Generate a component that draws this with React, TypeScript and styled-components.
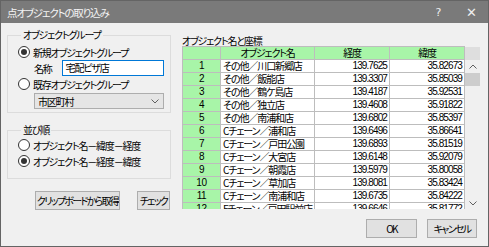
import styled, { createGlobalStyle } from 'styled-components'

const GlobalStyle = createGlobalStyle`
    html, body {
        margin: 0;
        padding: 0;
        background: #f0f0f0;
    }
    * {
        box-sizing: border-box;
    }
`

const Dialog = styled.div`
    display: flex;
    flex-flow: column;
    width: 489px;
    height: 247px;
    border: 1px solid #646464;
    background: #f0f0f0;
    font-family: 'Noto Sans CJK JP', sans-serif;
    font-size: 10px;
    font-feature-settings: 'palt';
    letter-spacing: -1.2px;
    color: #000;
    overflow: hidden;
`

const TitleBar = styled.div`
    display: flex;
    align-items: center;
    height: 22px;
    padding: 0 0 0 6px;
    background: #7a7a7a;
    color: #f4f4f4;
    font-size: 10.5px;
`

const Title = styled.div`
    flex: 1;
`

const TitleButton = styled.div<{ $size?: number }>`
    width: 33px;
    text-align: center;
    font-family: 'DejaVu Sans', sans-serif;
    letter-spacing: 0;
    font-size: ${(p) => p.$size ?? 11}px;
    color: #eeeeee;
`

const Body = styled.div`
    flex: 1;
    display: flex;
    flex-flow: row;
    padding: 6px 8px 0 6px;
`

const LeftColumn = styled.div`
    display: flex;
    flex-flow: column;
    width: 166px;
`

const Group = styled.fieldset<{ $height: number; $gap?: number; $pad: string }>`
    display: flex;
    flex-flow: column;
    height: ${(p) => p.$height}px;
    margin: 0 0 ${(p) => p.$gap ?? 0}px 0;
    padding: ${(p) => p.$pad};
    border: 1px solid #dcdcdc;
`

const Legend = styled.legend`
    margin-left: 3px;
    padding: 0 2px;
    line-height: 12px;
`

const RadioRow = styled.label`
    display: flex;
    align-items: center;
    gap: 3px;
    height: 16px;
    white-space: nowrap;
`

const RadioCircle = styled.span<{ $checked?: boolean }>`
    position: relative;
    flex: none;
    width: 12px;
    height: 12px;
    border: 1px solid #333;
    border-radius: 50%;
    background: #fff;

    &::after {
        content: '';
        display: ${(p) => (p.$checked ? 'block' : 'none')};
        position: absolute;
        left: 2px;
        top: 2px;
        width: 6px;
        height: 6px;
        border-radius: 50%;
        background: #333;
    }
`

const NameRow = styled.div`
    display: flex;
    align-items: center;
    height: 16px;
    margin-left: 16px;
    gap: 10px;
`

const TextInput = styled.div`
    width: 102px;
    height: 16px;
    padding-left: 3px;
    line-height: 14px;
    border: 1px solid #0078d7;
    background: #fff;
`

const Select = styled.div`
    display: flex;
    align-items: center;
    justify-content: space-between;
    width: 130px;
    height: 16px;
    margin: 1px 0 0 16px;
    padding: 0 4px 0 3px;
    border: 1px solid #adadad;
    background: #e5e5e5;
`

const ButtonRow = styled.div`
    display: flex;
    gap: 17px;
    margin: 12px 0 0 28px;
`

const Button = styled.button<{ $width: number }>`
    width: ${(p) => p.$width}px;
    height: 19px;
    padding: 0;
    border: 1px solid #adadad;
    background: #e1e1e1;
    font: inherit;
    letter-spacing: -1.7px;
    font-feature-settings: inherit;
    white-space: nowrap;
    overflow: hidden;
    color: #000;
`

const RightColumn = styled.div`
    display: flex;
    flex-flow: column;
    margin-left: 11px;
    padding-top: 6px;
`

const TableLabel = styled.div`
    line-height: 11px;
`

const TableArea = styled.div`
    display: flex;
    flex-flow: row;
    height: 163px;
    overflow: hidden;
`

const Grid = styled.table`
    border-collapse: collapse;
    table-layout: fixed;
    width: 283px;
    align-self: flex-start;
`

const HeadCell = styled.th<{ $width: number }>`
    width: ${(p) => p.$width}px;
    height: 13px;
    padding: 0;
    font-weight: normal;
    line-height: 12px;
    background: #a8f5a8;
    border: 1px solid #bdbdbd;
`

const NumCell = styled.td`
    height: 13px;
    padding: 0;
    line-height: 12px;
    text-align: center;
    background: #a8f5a8;
    border: 1px solid #bdbdbd;
    font-family: 'Liberation Sans', sans-serif;
    font-size: 10px;
    letter-spacing: -0.4px;
`

const Cell = styled.td<{ $num?: boolean }>`
    height: 13px;
    padding: ${(p) => (p.$num ? '0 2px 0 0' : '0 0 0 2px')};
    line-height: 12px;
    white-space: nowrap;
    overflow: hidden;
    text-align: ${(p) => (p.$num ? 'right' : 'left')};
    background: #fff;
    border: 1px solid #bdbdbd;
    font-family: ${(p) =>
        p.$num ? "'Liberation Sans', sans-serif" : "'Noto Sans CJK JP', sans-serif"};
    letter-spacing: ${(p) => (p.$num ? '-0.9px' : '-1.1px')};
`

const ScrollBar = styled.div`
    display: flex;
    flex-flow: column;
    width: 15px;
`

const ScrollCorner = styled.div`
    height: 13px;
    margin-top: 1px;
    background: #dedede;
`

const ScrollArrow = styled.div`
    display: flex;
    justify-content: center;
    align-items: center;
    height: 12px;
`

const ScrollThumb = styled.div`
    height: 13px;
    margin-top: 1px;
    background: #cdcdcd;
`

const ScrollTrack = styled.div`
    flex: 1;
`

const Footer = styled.div`
    display: flex;
    justify-content: flex-end;
    gap: 10px;
    padding: 0 11px 8px 0;
`

const rows: [number, string, string, string][] = [
    [1, 'その他／川口新郷店', '139.7625', '35.82673'],
    [2, 'その他／飯能店', '139.3307', '35.85039'],
    [3, 'その他／鶴ケ島店', '139.4187', '35.92531'],
    [4, 'その他／独立店', '139.4608', '35.91822'],
    [5, 'その他／南浦和店', '139.6802', '35.85397'],
    [6, 'Cチェーン／浦和店', '139.6496', '35.86641'],
    [7, 'Cチェーン／戸田公園', '139.6893', '35.81519'],
    [8, 'Cチェーン／大宮店', '139.6148', '35.92079'],
    [9, 'Cチェーン／朝霞店', '139.5979', '35.80058'],
    [10, 'Cチェーン／草加店', '139.8081', '35.83424'],
    [11, 'Cチェーン／南浦和店', '139.6735', '35.84222'],
    [12, 'Fチェーン／戸田駅前店', '139.6646', '35.81772'],
]

const Chevron = ({ up }: { up?: boolean }) => (
    <svg width="8" height="5" viewBox="0 0 8 5">
        <path
            d={up ? 'M0.5 4.5 L4 1 L7.5 4.5' : 'M0.5 0.5 L4 4 L7.5 0.5'}
            fill="none"
            stroke="#606060"
            strokeWidth="1"
        />
    </svg>
)

export default function App() {
    return (
        <Dialog>
            <GlobalStyle />
            <TitleBar>
                <Title>点オブジェクトの取り込み</Title>
                <TitleButton>?</TitleButton>
                <TitleButton $size={13}>✕</TitleButton>
            </TitleBar>

            <Body>
                <LeftColumn>
                    <Group $height={84} $gap={11} $pad="3px 0 0 10px">
                        <Legend>オブジェクトグループ</Legend>
                        <RadioRow>
                            <RadioCircle $checked />
                            新規オブジェクトグループ
                        </RadioRow>
                        <NameRow>
                            名称
                            <TextInput>宅配ピザ店</TextInput>
                        </NameRow>
                        <RadioRow>
                            <RadioCircle />
                            既存オブジェクトグループ
                        </RadioRow>
                        <Select>
                            市区町村
                            <Chevron />
                        </Select>
                    </Group>

                    <Group $height={55} $pad="1px 0 0 10px">
                        <Legend>並び順</Legend>
                        <RadioRow>
                            <RadioCircle />
                            オブジェクト名－緯度－経度
                        </RadioRow>
                        <RadioRow>
                            <RadioCircle $checked />
                            オブジェクト名－経度－緯度
                        </RadioRow>
                    </Group>

                    <ButtonRow>
                        <Button $width={85}>クリップボードから取得</Button>
                        <Button $width={33}>チェック</Button>
                    </ButtonRow>
                </LeftColumn>

                <RightColumn>
                    <TableLabel>オブジェクト名と座標</TableLabel>
                    <TableArea>
                        <Grid>
                            <thead>
                                <tr>
                                    <HeadCell $width={38} />
                                    <HeadCell $width={94}>オブジェクト名</HeadCell>
                                    <HeadCell $width={75}>経度</HeadCell>
                                    <HeadCell $width={75}>緯度</HeadCell>
                                </tr>
                            </thead>
                            <tbody>
                                {rows.map(([no, name, lng, lat]) => (
                                    <tr key={no}>
                                        <NumCell>{no}</NumCell>
                                        <Cell>{name}</Cell>
                                        <Cell $num>{lng}</Cell>
                                        <Cell $num>{lat}</Cell>
                                    </tr>
                                ))}
                            </tbody>
                        </Grid>
                        <ScrollBar>
                            <ScrollCorner />
                            <ScrollArrow>
                                <Chevron up />
                            </ScrollArrow>
                            <ScrollThumb />
                            <ScrollTrack />
                            <ScrollArrow>
                                <Chevron />
                            </ScrollArrow>
                        </ScrollBar>
                    </TableArea>
                </RightColumn>
            </Body>

            <Footer>
                <Button $width={51}>OK</Button>
                <Button $width={50}>キャンセル</Button>
            </Footer>
        </Dialog>
    )
}
